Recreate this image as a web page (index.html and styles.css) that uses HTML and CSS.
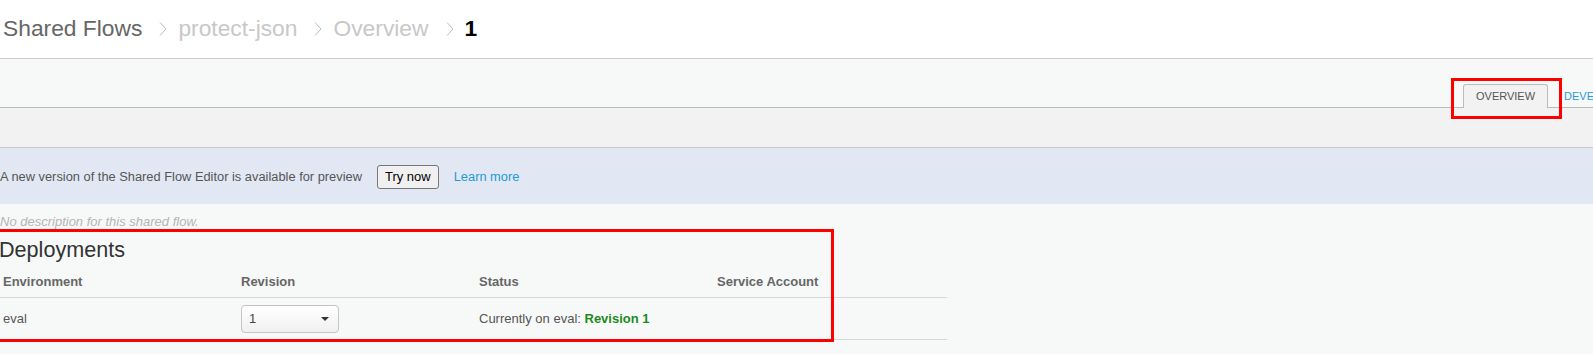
FILE: index.html
```html
<!DOCTYPE html>
<html>

<head>
    <title>protect-json - Overview</title>
    <link rel="stylesheet" href="styles.css">
</head>

<body>
    <div class="header">
        <span class="crumb crumb-root">Shared Flows</span>
        <svg class="chevron" width="8" height="16" viewBox="0 0 8 16"><polyline points="1,1.5 7,8 1,14.5" fill="none" stroke="#bdbdbd" stroke-width="1"/></svg>
        <span class="crumb">protect-json</span>
        <svg class="chevron" width="8" height="16" viewBox="0 0 8 16"><polyline points="1,1.5 7,8 1,14.5" fill="none" stroke="#bdbdbd" stroke-width="1"/></svg>
        <span class="crumb">Overview</span>
        <svg class="chevron" width="8" height="16" viewBox="0 0 8 16"><polyline points="1,1.5 7,8 1,14.5" fill="none" stroke="#bdbdbd" stroke-width="1"/></svg>
        <span class="crumb crumb-current">1</span>
    </div>

    <div class="tabbar">
        <div class="tabs">
            <div class="tab active">OVERVIEW<span class="highlight"></span></div>
            <div class="tab">DEVELOP</div>
            <div class="tab">TRACE</div>
        </div>
    </div>

    <div class="toolbar"></div>

    <div class="banner">
        <span>A new version of the Shared Flow Editor is available for preview</span>
        <button class="try-button">Try now</button>
        <a class="learn-link" href="#">Learn more</a>
    </div>

    <div class="content">
        <div class="description">No description for this shared flow.</div>

        <div class="deployments">
            <h2>Deployments</h2>
            <table>
                <thead>
                    <tr>
                        <th>Environment</th>
                        <th>Revision</th>
                        <th>Status</th>
                        <th>Service Account</th>
                    </tr>
                </thead>
                <tbody>
                    <tr>
                        <td>eval</td>
                        <td>
                            <div class="select">
                                <span>1</span>
                                <span class="caret"></span>
                            </div>
                        </td>
                        <td>Currently on eval: <span class="revision">Revision 1</span></td>
                        <td></td>
                    </tr>
                </tbody>
            </table>
            <div class="highlight deploy-highlight"></div>
        </div>
    </div>
</body>

</html>
```

FILE: styles.css
```css
html,
body {
    min-height: 100%;
}

body {
    margin: 0;
    min-height: 354px;
    font-family: "Liberation Sans", Arial, sans-serif;
    background-color: #f7f9f9;
    overflow: hidden;
}

.header {
    height: 59px;
    box-sizing: border-box;
    padding: 11px 0 0 3px;
    background-color: #fff;
    border-bottom: 1px solid #cfcfcf;
    display: flex;
    align-items: flex-start;
    font-size: 22.8px;
    line-height: 25px;
}

.crumb {
    color: #c8c8c8;
    padding-top: 5px;
}

.crumb-root {
    color: #666;
}

.crumb-current {
    color: #000;
    font-weight: bold;
}

.chevron {
    margin: 10px 11px 0 17px;
}

.tabbar {
    height: 49px;
    box-sizing: border-box;
    background-color: #f7f8f8;
    border-bottom: 1px solid #bbb;
    display: flex;
    align-items: flex-end;
}

.tabs {
    display: flex;
    margin-left: 1463px;
    margin-bottom: -1px;
}

.tab {
    height: 24px;
    box-sizing: border-box;
    padding: 0 12px;
    margin-right: 3px;
    font-size: 11px;
    line-height: 22px;
    color: #2a9ad8;
    border: 1px solid transparent;
    border-bottom: none;
    white-space: nowrap;
}

.tab.active {
    position: relative;
    color: #555;
    background-color: #f2f2f2;
    border-color: #bbb;
    border-radius: 3px 3px 0 0;
}

.tab.active .highlight {
    position: absolute;
    left: -13px;
    top: -7px;
    width: 111px;
    height: 41px;
    box-sizing: border-box;
    border: 3px solid #f00;
}

.toolbar {
    height: 40px;
    box-sizing: border-box;
    background-color: #f2f2f2;
    border-bottom: 1px solid #c8c8c8;
}

.banner {
    height: 56px;
    display: flex;
    align-items: center;
    gap: 15px;
    background-color: #e1e8f4;
    font-size: 12.85px;
    color: #555;
    padding-top: 1px;
    box-sizing: border-box;
}

.try-button {
    height: 24px;
    padding: 0 7px;
    font-family: "Liberation Sans", Arial, sans-serif;
    font-size: 13px;
    color: #000;
    background-color: #f0f0f0;
    border: 1px solid #767676;
    border-radius: 3px;
}

.learn-link {
    color: #1f9ad6;
    text-decoration: none;
}

.content {
    padding: 10px 0 20px;
}

.description {
    font-size: 13px;
    line-height: 15px;
    font-style: italic;
    color: #b4b4b4;
}

.deployments {
    position: relative;
}

h2 {
    margin: 8px 0 0 -1px;
    font-size: 21.6px;
    line-height: 25px;
    font-weight: normal;
    color: #333;
}

table {
    width: 952px;
    margin-left: -5px;
    border-collapse: collapse;
    table-layout: fixed;
    font-size: 13px;
    line-height: 15px;
}

th {
    padding: 12px 8px 8px;
    text-align: left;
    color: #666;
    border-bottom: 1px solid #d8d8d8;
}

td {
    height: 42px;
    box-sizing: border-box;
    padding: 0 8px;
    color: #555;
    border-bottom: 1px solid #d8d8d8;
    vertical-align: middle;
}

.select {
    width: 98px;
    height: 28px;
    box-sizing: border-box;
    padding: 0 9px 0 7px;
    display: flex;
    align-items: center;
    justify-content: space-between;
    color: #444;
    border: 1px solid #c4c4c4;
    border-radius: 4px;
    background: linear-gradient(#fff, #f0f0f0);
}

.caret {
    width: 0;
    height: 0;
    border-top: 4px solid #333;
    border-left: 4px solid transparent;
    border-right: 4px solid transparent;
}

.revision {
    color: #1e8a1e;
    font-weight: bold;
}

.deploy-highlight {
    position: absolute;
    left: -10px;
    top: -8px;
    width: 844px;
    height: 113px;
    box-sizing: border-box;
    border: 3px solid #f00;
}
```
